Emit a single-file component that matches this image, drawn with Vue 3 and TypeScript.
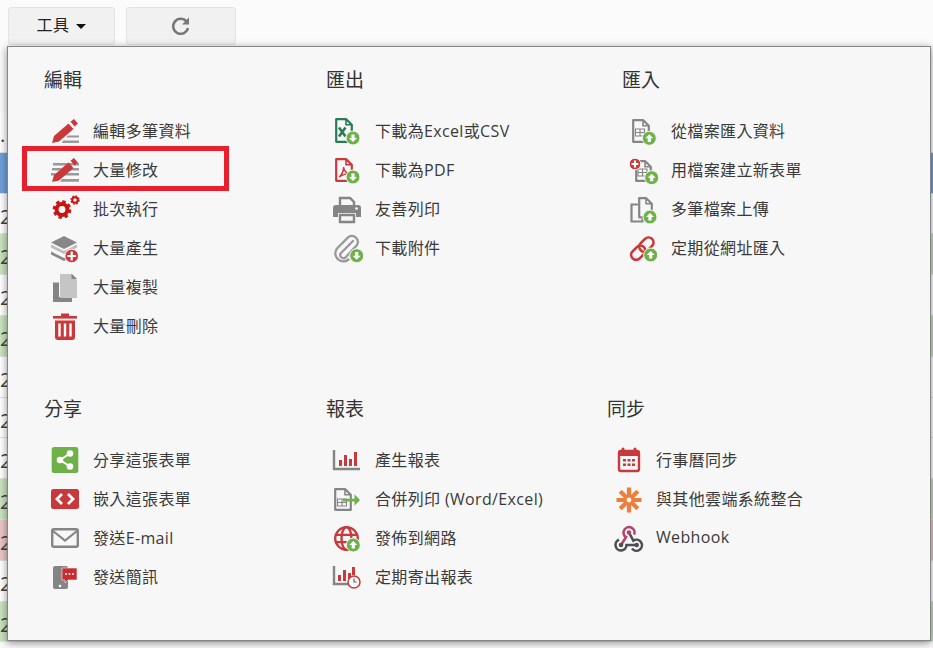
<script setup lang="ts">
const RED = '#c9383a'
const GRAY = '#858585'
const GREEN = '#6db148'

function badge(cx: number, cy: number, dir: 'up' | 'down'): string {
  const s = dir === 'up' ? 1 : -1
  return `<circle cx="${cx}" cy="${cy}" r="7" fill="${GREEN}" stroke="#f7f7f7" stroke-width="1"/>` +
    `<path d="M${cx} ${cy - 4 * s}l4 ${4 * s}h-2.4v${3.6 * s}h-3.2v${-3.6 * s}h-2.4z" fill="#fff"/>`
}
function plus(cx: number, cy: number, r = 6): string {
  return `<circle cx="${cx}" cy="${cy}" r="${r}" fill="${RED}" stroke="#f7f7f7" stroke-width="1"/>` +
    `<path d="M${cx - r + 2.4} ${cy}h${2 * r - 4.8}M${cx} ${cy - r + 2.4}v${2 * r - 4.8}" stroke="#fff" stroke-width="2.2"/>`
}
function file(x: number, y: number, w: number, h: number, c: string): string {
  return `<path d="M${x + 1.2} ${y + 1.2}h${w - 8}l${5.6} 5.6v${h - 8}h${-(w - 2.4)}z" fill="none" stroke="${c}" stroke-width="2.2" stroke-linejoin="round"/>` +
    `<path d="M${x + w - 7} ${y + 1.2}v5.6h5.6" fill="none" stroke="${c}" stroke-width="1.6"/>`
}
function grid(x: number, y: number): string {
  return `<path d="M${x} ${y}h9v7h-9zM${x} ${y + 3.5}h9M${x + 4.5} ${y}v7" fill="none" stroke="${GRAY}" stroke-width="1.1"/>`
}
const pencil = `<path d="M3 28l2-7 14.5-12.5 5 5.5L10 26.5z" fill="${RED}"/><path d="M21.5 6.8l3.4-2.8 4 4.6-3.2 3z" fill="${RED}"/>`
function gear(cx: number, cy: number, r: number): string {
  const p = (2 * Math.PI * r) / 8
  return `<circle cx="${cx}" cy="${cy}" r="${r * 0.68}" fill="none" stroke="#c81414" stroke-width="${r * 0.5}"/>` +
    `<circle cx="${cx}" cy="${cy}" r="${r}" fill="none" stroke="#c81414" stroke-width="${r * 0.34}" stroke-dasharray="${p * 0.55} ${p * 0.45}"/>`
}
function chart(): string {
  return `<path d="M3 6v19h26" fill="none" stroke="${GRAY}" stroke-width="2.4"/>` +
    `<path d="M8 16h3v6H8zM13 11h3v11h-3zM18 15h3v7h-3zM23 8h3v14h-3z" fill="${RED}"/>`
}

const icons: Record<string, string> = {
  edit: `<path d="M19 20.5h11v2H17zM14 25.5h16v2.5H13z" fill="#999"/>${pencil}`,
  bulk: `<path d="M4 9h15l-2.5 2.5H4zM20 9h10v2.500h-10zM3 14h10l-2.500 2.500H3zM20 14h10v2.500h-10zM2 19h5l-2 2.500H2zM17 19h13v2.500H15zM13 25h17v2.800H11z" fill="#999"/>${pencil}`,
  gears: gear(13, 16.500, 8) + gear(26, 7, 4),
  layers: `<path d="M15 4l13 6.500-13 6.500-13-6.500z" fill="#888"/><path d="M2 12.500l13 6.500 13-6.500v3l-13 6.500-13-6.500z" fill="#bbb"/><path d="M2 19.500l13 6.500 6-3v3l-6 3-13-6.500z" fill="#888"/>${plus(22.700, 24, 6.800)}`,
  copy: `<path d="M4 13.500h6V28h13v5H4z" transform="translate(0 -2)" fill="#858585"/><path d="M11 3h11l6 6v18H11z" fill="#c5c5c5"/><path d="M22.500 2.500l5.500 5.500h-5.500z" fill="#858585"/>`,
  trash: `<path d="M4 6h24v2.600H4z" fill="${RED}"/><path d="M12 6V3.500h8V6z" fill="${RED}"/><path d="M6 10.500h20V27a3 3 0 0 1-3 3H9a3 3 0 0 1-3-3z" fill="${RED}"/><path d="M10.500 13.500v13M16 13.500v13M21.500 13.500v13" stroke="#fff" stroke-width="2.400"/>`,
  excel: file(4, 3, 18, 25, '#2b7a57') + `<path d="M8 12.500l6.500 9M14.500 12.500L8 21.500" stroke="#2b7a57" stroke-width="2.600"/>` + badge(22, 23, 'down'),
  pdf: file(4, 4, 18, 24, RED) + `<path d="M8 23c3-2 5-7 4.500-10 .5 4 2.500 6 6 6.500-3.500 0-7.500 1.500-10.500 3.500z" fill="none" stroke="${RED}" stroke-width="1.500"/>` + badge(22, 23, 'down'),
  print: `<path d="M9 12V5h10l4 4v3" fill="none" stroke="${GRAY}" stroke-width="2.400"/><path d="M5 12h22a3 3 0 0 1 3 3v9h-5v-4H7v4H2v-9a3 3 0 0 1 3-3z" fill="${GRAY}"/><path d="M9 22h14v7H9z" fill="none" stroke="${GRAY}" stroke-width="2.400"/><circle cx="25.500" cy="15.500" r="1.300" fill="#fff"/>`,
  clip: `<path d="M23 9L11 21a3.200 3.200 0 0 0 4.500 4.500L27 13a6 6 0 0 0-8.500-8L7 16.500a8 8 0 0 0 11.500 11" fill="none" stroke="#999" stroke-width="2.300" stroke-linecap="round" transform="translate(-1 0)"/>` + badge(25.700, 23.700, 'down'),
  imp: file(5, 4, 18, 24, GRAY) + grid(8.500, 14) + badge(22.300, 23.300, 'up'),
  newform: file(8, 6, 17, 22, GRAY) + grid(11, 15) + plus(8, 10, 5.800) + badge(24.700, 23.700, 'up'),
  multi: `<path d="M11 11.500H4.500v17h11v-3" fill="none" stroke="${GRAY}" stroke-width="2.200"/>` + file(11, 4, 15, 21.500, GRAY) + badge(23, 24, 'up'),
  link: `<g fill="none" stroke="${RED}" stroke-width="2.600" transform="rotate(-45 15.500 16.500)"><rect x="1.500" y="11.500" width="16" height="10" rx="5"/><rect x="13" y="11.500" width="16" height="10" rx="5"/></g>` + badge(23.700, 23, 'up'),
  share: `<rect x="2.700" y="3" width="26.600" height="26" rx="2.500" fill="${GREEN}"/><path d="M21 9.500l-10 6.500 10 6.500" fill="none" stroke="#fff" stroke-width="2"/><circle cx="21" cy="9.500" r="3.300" fill="#fff"/><circle cx="11" cy="16" r="3.300" fill="#fff"/><circle cx="21" cy="22.500" r="3.300" fill="#fff"/>`,
  embed: `<rect x="2" y="6" width="28" height="20" rx="2.500" fill="${RED}"/><path d="M13 11l-5 5 5 5M19 11l5 5-5 5" fill="none" stroke="#fff" stroke-width="2.800"/>`,
  mail: `<rect x="3.200" y="7.200" width="25.600" height="17.600" rx="1.500" fill="none" stroke="${GRAY}" stroke-width="2.400"/><path d="M4 9l12 9.500L28 9" fill="none" stroke="${GRAY}" stroke-width="2.200"/>`,
  sms: `<rect x="4" y="5" width="15" height="23" rx="2" fill="${GRAY}"/><circle cx="11" cy="25" r="1.300" fill="#fff"/><path d="M13 7h15v12h-9l-3 3v-3h-3z" fill="#c92b2e" stroke="#f7f7f7" stroke-width=".6"/><circle cx="17" cy="13" r="1" fill="#fff"/><circle cx="20.500" cy="13" r="1" fill="#fff"/><circle cx="24" cy="13" r="1" fill="#fff"/>`,
  report: chart(),
  merge: file(3, 5, 18, 23, GRAY) + `<path d="M6.500 16h9v7h-9zM6.500 19.500h9M11 16v7" fill="none" stroke="${GRAY}" stroke-width="1.100"/><path d="M12 17.500h11.500V13l5.500 6-5.500 6v-4.500H12z" fill="${GREEN}" transform="translate(0 -1) scale(1 .95)"/>`,
  globe: `<g fill="none" stroke="${RED}" stroke-width="2.300"><circle cx="15.500" cy="16.500" r="11.300"/><ellipse cx="15.500" cy="16.500" rx="5" ry="11.300"/><path d="M4.500 12.800h22M4.500 20.200h22"/></g>` + badge(22.300, 23, 'up'),
  timed: `<path d="M3 5v18h18" fill="none" stroke="${GRAY}" stroke-width="2.400"/><path d="M7 14h3v6H7zM12 9h3v11h-3zM17 12h3v8h-3zM21 6h3v8h-3z" fill="${RED}"/><circle cx="23" cy="21" r="6" fill="#f7f7f7" stroke="${RED}" stroke-width="1.500"/><path d="M23 17.500V21h2.500" fill="none" stroke="#666" stroke-width="1.200"/>`,
  calendar: `<rect x="7" y="7" width="20" height="20" rx="2" fill="none" stroke="${RED}" stroke-width="2.400"/><path d="M7 7h20v5H7z" fill="${RED}"/><path d="M11 5v4M23 5v4" stroke="${RED}" stroke-width="3" stroke-linecap="round"/><path d="M11 15h3v2.500h-3zM15.500 15h3v2.500h-3zM20 15h3v2.500h-3zM11 19.500h3V22h-3zM15.500 19.500h3V22h-3zM20 19.500h3V22h-3z" fill="${RED}"/>`,
  zapier: `<g stroke="#ee7f3b" stroke-width="4.200"><path d="M17 4.500v25M4.500 17h25M8.200 8.200l17.600 17.600M25.800 8.200L8.200 25.800"/></g><circle cx="17" cy="17" r="2.400" fill="#f7f7f7"/>`,
  webhook: `<g fill="none" stroke-width="2.600"><path d="M9 23L14 15.200A5.500 5.500 0 1 1 22.200 12.600" stroke="#b34466"/><path d="M17 10.500L21.300 18.700A5.500 5.500 0 1 1 20 26.500" stroke="#4f4f58"/><path d="M24.700 23H14.500A5.500 5.500 0 1 1 7 17.800" stroke="#4f4f58"/></g><circle cx="17" cy="10.500" r="2.300" fill="#b34466"/><circle cx="9" cy="23" r="2.300" fill="#4f4f58"/><circle cx="24.700" cy="23" r="2.300" fill="#4f4f58"/>`,
}

interface Item { label: string; icon: string }
interface Section { title: string; items: Item[] }

const topRow: Section[] = [
  { title: '編輯', items: [
    { label: '編輯多筆資料', icon: 'edit' },
    { label: '大量修改', icon: 'bulk' },
    { label: '批次執行', icon: 'gears' },
    { label: '大量產生', icon: 'layers' },
    { label: '大量複製', icon: 'copy' },
    { label: '大量刪除', icon: 'trash' },
  ] },
  { title: '匯出', items: [
    { label: '下載為Excel或CSV', icon: 'excel' },
    { label: '下載為PDF', icon: 'pdf' },
    { label: '友善列印', icon: 'print' },
    { label: '下載附件', icon: 'clip' },
  ] },
  { title: '匯入', items: [
    { label: '從檔案匯入資料', icon: 'imp' },
    { label: '用檔案建立新表單', icon: 'newform' },
    { label: '多筆檔案上傳', icon: 'multi' },
    { label: '定期從網址匯入', icon: 'link' },
  ] },
]
const bottomRow: Section[] = [
  { title: '分享', items: [
    { label: '分享這張表單', icon: 'share' },
    { label: '嵌入這張表單', icon: 'embed' },
    { label: '發送E-mail', icon: 'mail' },
    { label: '發送簡訊', icon: 'sms' },
  ] },
  { title: '報表', items: [
    { label: '產生報表', icon: 'report' },
    { label: '合併列印 (Word/Excel)', icon: 'merge' },
    { label: '發佈到網路', icon: 'globe' },
    { label: '定期寄出報表', icon: 'timed' },
  ] },
  { title: '同步', items: [
    { label: '行事曆同步', icon: 'calendar' },
    { label: '與其他雲端系統整合', icon: 'zapier' },
    { label: 'Webhook', icon: 'webhook' },
  ] },
]
const rows: string[] = ['head', 'sel', 'plain', 'green', 'plain', 'green', 'plain', 'plain', 'plain', 'green', 'pink', 'plain', 'green']
</script>

<template>
  <div class="page">
    <div class="toolbar">
      <button class="tool tool-menu">
        <span class="tool-label">工具</span>
        <svg width="10" height="5" viewBox="0 0 10 5"><path d="M0 0h10L5 5z" fill="#111" /></svg>
      </button>
      <button class="tool tool-redo">
        <svg width="20" height="20" viewBox="0 0 20 20">
          <path d="M15.500 5.500A7.500 7.500 0 1 0 17 12" fill="none" stroke="#777" stroke-width="2.500" />
          <path d="M18 1.500v7h-7z" fill="#777" />
        </svg>
      </button>
    </div>

    <div class="table">
      <div v-for="(r, i) in rows" :key="i" class="row" :class="r">
        <span v-if="r === 'head'">.</span>
        <span v-else-if="r !== 'sel'">2</span>
      </div>
    </div>

    <div class="panel">
      <div class="groups groups-top">
        <section v-for="s in topRow" :key="s.title">
          <h3>{{ s.title }}</h3>
          <div v-for="it in s.items" :key="it.label" class="item">
            <svg class="icon" viewBox="0 0 32 32" width="32" height="32" v-html="icons[it.icon]"></svg>
            <span class="label">{{ it.label }}</span>
          </div>
        </section>
      </div>
      <div class="groups groups-bottom">
        <section v-for="s in bottomRow" :key="s.title">
          <h3>{{ s.title }}</h3>
          <div v-for="it in s.items" :key="it.label" class="item">
            <svg class="icon" viewBox="0 0 32 32" width="32" height="32" v-html="icons[it.icon]"></svg>
            <span class="label">{{ it.label }}</span>
          </div>
        </section>
      </div>
    </div>

    <div class="highlight"></div>
  </div>
</template>

<style>
html, body { margin: 0; background: #fbfbfb; }
</style>

<style scoped>
.page {
  position: relative;
  width: 933px;
  height: 648px;
  overflow: hidden;
  background: #fbfbfb;
  font-family: "Open Sans", "Noto Sans CJK TC", sans-serif;
  color: #333;
}
.toolbar {
  display: flex;
  gap: 11px;
  padding: 7px 0 0 8px;
  height: 39px;
}
.tool {
  display: flex;
  align-items: center;
  justify-content: center;
  height: 38px;
  padding: 0;
  border: 1px solid #e4e4e4;
  border-radius: 3px;
  background: #f1f1f1;
  font: inherit;
  font-size: 16px;
  color: #222;
}
.tool-label { padding-bottom: 4px; letter-spacing: 0.4px; }
.tool-menu { width: 107px; gap: 7px; }
.tool-redo { width: 110px; }
.table { margin-top: 66px; }
.row {
  height: 40.8px;
  box-sizing: border-box;
  border-bottom: 1px solid #e2e2e2;
  font-size: 20px;
  line-height: 46px;
  color: #444;
  white-space: nowrap;
  overflow: hidden;
  background: #fff;
}
.row.sel { background: #6f9fd8; }
.row.green { background: #c9e3c0; }
.row.pink { background: #eac6c6; }
.panel {
  position: absolute;
  left: 7px;
  top: 46px;
  width: 924px;
  height: 595px;
  box-sizing: border-box;
  border: 1px solid #858585;
  background: #f7f7f7;
  box-shadow: 0 2px 8px rgba(0, 0, 0, 0.45);
  padding: 19px 0 0 36px;
}
.groups { display: grid; }
.groups-top { grid-template-columns: 282px 296px 1fr; height: 329px; }
.groups-bottom { grid-template-columns: 282px 281px 1fr; }
h3 {
  margin: 0 0 16.500px;
  font-size: 19px;
  font-weight: 400;
  line-height: 29px;
  color: #333;
}
.item {
  display: flex;
  align-items: center;
  gap: 12px;
  height: 39px;
  padding-left: 5px;
  font-size: 16px;
  color: #3a3a3a;
  white-space: nowrap;
}
.label { padding-bottom: 2px; letter-spacing: 0.35px; }
.icon { flex: none; }
.highlight {
  position: absolute;
  left: 22px;
  top: 146px;
  width: 207px;
  height: 45px;
  box-sizing: border-box;
  border: 5px solid #e81f2c;
}
</style>
